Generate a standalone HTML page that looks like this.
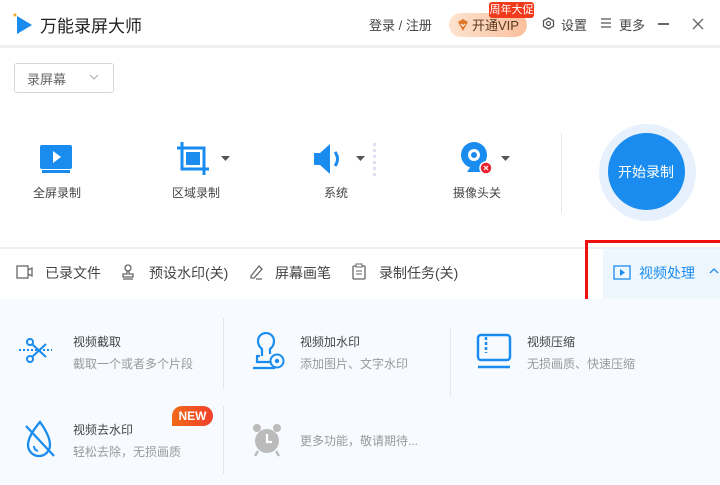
<!DOCTYPE html>
<html><head><meta charset="utf-8"><style>
*{margin:0;padding:0;box-sizing:border-box}
body{width:720px;height:485px;overflow:hidden;background:#fff;font-family:"Liberation Sans","Noto Sans CJK SC",sans-serif;color:#333;position:relative}
.a{position:absolute;white-space:nowrap}
.t{font-size:13px;color:#444}
.s{font-size:12px;color:#999}
.tb{font-size:14px;color:#444}
</style></head><body>
<!-- header -->
<svg class="a" style="left:12px;top:12px" width="22" height="24"><circle cx="3" cy="3" r="1.5" fill="#f5a623"/><path d="M5 4 L20 13 L5 22 Z" fill="#1a8cf0"/></svg>
<div class="a" style="left:40px;top:12px;font-size:17px;color:#222">万能录屏大师</div>
<div class="a t" style="left:369px;top:15px;color:#444">登录 / 注册</div>
<div class="a" style="left:449px;top:13px;width:78px;height:24px;border-radius:12px;background:linear-gradient(90deg,#fde3cf,#fbbf9c)"></div>
<svg class="a" style="left:456px;top:18px" width="14" height="14"><path d="M2 4 L7 1 L12 4 L7 13 Z" fill="#e0782a"/><path d="M5 6 L7 8 L9 6" stroke="#fff" fill="none" stroke-width="1.2"/></svg>
<div class="a t" style="left:472px;top:15px;color:#5a3a20">开通VIP</div>
<div class="a" style="left:489px;top:2px;width:45px;height:16px;background:#f23a1c;border-radius:3px;color:#fff;font-size:11px;line-height:16px;text-align:center">周年大促</div>
<svg class="a" style="left:542px;top:17px" width="13" height="13"><path d="M6.5 1 L11.5 3.8 L11.5 9.2 L6.5 12 L1.5 9.2 L1.5 3.8 Z" fill="none" stroke="#555" stroke-width="1.3"/><circle cx="6.5" cy="6.5" r="2" fill="none" stroke="#555" stroke-width="1.2"/></svg>
<div class="a t" style="left:561px;top:15px">设置</div>
<svg class="a" style="left:600px;top:17px" width="12" height="12"><path d="M1 2H11M1 6H11M1 10H11" stroke="#555" stroke-width="1.3"/></svg>
<div class="a t" style="left:619px;top:15px">更多</div>
<div class="a" style="left:658px;top:23px;width:11px;height:1.5px;background:#666"></div>
<svg class="a" style="left:692px;top:18px" width="12" height="12"><path d="M1 1L11 11M11 1L1 11" stroke="#666" stroke-width="1.3"/></svg>
<div class="a" style="left:0;top:45px;width:720px;height:3px;background:#f0f0f2"></div>
<!-- dropdown -->
<div class="a" style="left:14px;top:63px;width:100px;height:30px;border:1px solid #d6d6da;border-radius:3px"></div>
<div class="a t" style="left:27px;top:69px;color:#666">录屏幕</div>
<svg class="a" style="left:89px;top:74px" width="10" height="7"><path d="M1 1L5 5L9 1" stroke="#aaa" fill="none"/></svg>
<!-- icons row -->
<svg class="a" style="left:38px;top:144px" width="36" height="30"><rect x="2" y="1" width="32" height="24" rx="2" fill="#1a8cf0"/><rect x="4" y="26" width="28" height="3" fill="#1a8cf0"/><path d="M15 7L23 13L15 19Z" fill="#fff"/></svg>
<div class="a" style="left:33px;top:184px;font-size:12px;color:#444">全屏录制</div>
<svg class="a" style="left:176px;top:141px" width="36" height="36"><path d="M6 1V28H33M1 7H28V34" stroke="#1a8cf0" stroke-width="3" fill="none"/><rect x="10" y="11" width="14" height="13" fill="#1a8cf0"/></svg>
<svg class="a" style="left:221px;top:156px" width="9" height="6"><path d="M0 0H9L4.5 5Z" fill="#555"/></svg>
<div class="a" style="left:172px;top:184px;font-size:12px;color:#444">区域录制</div>
<svg class="a" style="left:312px;top:142px" width="40" height="34"><path d="M2 11H8L18 2V32L8 23H2Z" fill="#1a8cf0"/><path d="M23 10Q28 17 23 24" stroke="#1a8cf0" stroke-width="3" fill="none"/></svg>
<svg class="a" style="left:356px;top:156px" width="9" height="6"><path d="M0 0H9L4.5 5Z" fill="#555"/></svg>
<div class="a" style="left:373px;top:143px;width:3px;height:33px;border-left:3px dotted #dde0ee"></div>
<div class="a" style="left:324px;top:184px;font-size:12px;color:#444">系统</div>
<svg class="a" style="left:459px;top:141px" width="36" height="36"><circle cx="15" cy="14" r="13" fill="#1a8cf0"/><circle cx="15" cy="14" r="6" fill="#fff"/><circle cx="15" cy="14" r="3" fill="#1a8cf0"/><path d="M8 31H24L20 25H12Z" fill="#1a8cf0"/><circle cx="27" cy="27" r="6" fill="#e8252f" stroke="#fff" stroke-width="1.5"/><path d="M25 25L29 29M29 25L25 29" stroke="#fff" stroke-width="1.2"/></svg>
<svg class="a" style="left:501px;top:156px" width="9" height="6"><path d="M0 0H9L4.5 5Z" fill="#555"/></svg>
<div class="a" style="left:453px;top:184px;font-size:12px;color:#444">摄像头关</div>
<div class="a" style="left:561px;top:133px;width:1px;height:80px;background:#e6e6e6"></div>
<div class="a" style="left:599px;top:124px;width:97px;height:97px;border-radius:50%;background:#e6f1fd"></div>
<div class="a" style="left:608px;top:133px;width:77px;height:77px;border-radius:50%;background:#1a8cf0"></div>
<div class="a" style="left:618px;top:162px;font-size:14px;color:#fff">开始录制</div>
<!-- toolbar -->
<div class="a" style="left:0;top:247px;width:720px;height:2px;background:#f0f0f2"></div>
<svg class="a" style="left:16px;top:265px" width="18" height="14"><rect x="1" y="1" width="11" height="12" fill="none" stroke="#666" stroke-width="1.3"/><path d="M12 5L16 3V11L12 9" fill="none" stroke="#666" stroke-width="1.3"/></svg>
<div class="a tb" style="left:45px;top:263px">已录文件</div>
<svg class="a" style="left:121px;top:264px" width="14" height="16"><circle cx="7" cy="4" r="3" fill="none" stroke="#666" stroke-width="1.3"/><path d="M6 7V10H2V13H12V10H8V7M2 15H12" fill="none" stroke="#666" stroke-width="1.3"/></svg>
<div class="a tb" style="left:149px;top:263px">预设水印(关)</div>
<svg class="a" style="left:248px;top:264px" width="16" height="16"><path d="M3 12L11 2L14 5L6 14H3Z M8 15H14" fill="none" stroke="#666" stroke-width="1.3"/></svg>
<div class="a tb" style="left:275px;top:263px">屏幕画笔</div>
<svg class="a" style="left:352px;top:263px" width="14" height="17"><rect x="1" y="3" width="12" height="13" rx="1" fill="none" stroke="#666" stroke-width="1.3"/><rect x="4" y="1" width="6" height="3" fill="#fff" stroke="#666"/><path d="M4 8H10M4 11H10" stroke="#666"/></svg>
<div class="a tb" style="left:379px;top:263px">录制任务(关)</div>
<div class="a" style="left:603px;top:249px;width:117px;height:50px;background:#eef6fe"></div>
<svg class="a" style="left:613px;top:265px" width="18" height="15"><rect x="1" y="1" width="16" height="13" fill="none" stroke="#1a8cf0" stroke-width="1.3"/><path d="M7 4L12 7.5L7 11Z" fill="#1a8cf0"/></svg>
<div class="a tb" style="left:639px;top:263px;color:#1a8cf0">视频处理</div>
<svg class="a" style="left:708px;top:267px" width="12" height="8"><path d="M2 6L6 2L10 6" stroke="#1a8cf0" fill="none" stroke-width="1.3"/></svg>
<div class="a" style="left:585px;top:240px;width:140px;height:64px;border:3px solid #f01010"></div>
<!-- panel -->
<div class="a" style="left:0;top:299px;width:720px;height:186px;background:#f7fbff"></div>
<div class="a" style="left:223px;top:318px;width:1px;height:70px;background:#e4e6ea"></div>
<div class="a" style="left:450px;top:328px;width:1px;height:68px;background:#e4e6ea"></div>
<div class="a" style="left:223px;top:406px;width:1px;height:68px;background:#e4e6ea"></div>
<svg class="a" style="left:18px;top:338px" width="34" height="28"><path d="M1 12H34" stroke="#1a8cf0" stroke-width="2" stroke-dasharray="2 2"/><circle cx="12" cy="4" r="3" fill="none" stroke="#1a8cf0" stroke-width="2"/><circle cx="12" cy="21" r="3" fill="none" stroke="#1a8cf0" stroke-width="2"/><path d="M14 6L28 19M14 19L28 6" stroke="#1a8cf0" stroke-width="2"/></svg>
<div class="a t" style="left:73px;top:333px;font-size:12px">视频截取</div>
<div class="a s" style="left:73px;top:355px">截取一个或者多个片段</div>
<svg class="a" style="left:250px;top:332px" width="40" height="40"><path d="M10 24H7V30H28 M12 24V17Q8 14 8 9A8 8 0 0 1 24 9Q24 14 20 17V22" fill="none" stroke="#1a8cf0" stroke-width="2.2"/><path d="M3 36H25" stroke="#1a8cf0" stroke-width="2.2"/><circle cx="27" cy="29" r="6.5" fill="#f7fbff" stroke="#1a8cf0" stroke-width="2"/><circle cx="27" cy="29" r="2.2" fill="#1a8cf0"/></svg>
<div class="a t" style="left:300px;top:333px;font-size:12px">视频加水印</div>
<div class="a s" style="left:300px;top:355px">添加图片、文字水印</div>
<svg class="a" style="left:476px;top:333px" width="36" height="38"><rect x="2" y="2" width="32" height="25" rx="3" fill="none" stroke="#1a8cf0" stroke-width="2.5"/><path d="M10 4V20" stroke="#1a8cf0" stroke-width="2.5" stroke-dasharray="3 2"/><path d="M2 34H34" stroke="#1a8cf0" stroke-width="2.5"/></svg>
<div class="a t" style="left:527px;top:333px;font-size:12px">视频压缩</div>
<div class="a s" style="left:527px;top:355px">无损画质、快速压缩</div>
<div class="a" style="left:172px;top:406px;width:41px;height:20px;border-radius:10px 10px 10px 0;background:linear-gradient(90deg,#f06a1a,#f2402a);color:#fff;font-size:12px;font-weight:bold;line-height:20px;text-align:center">NEW</div>
<svg class="a" style="left:22px;top:420px" width="34" height="38"><path d="M18 2Q6 16 6 25A11 11 0 0 0 28 25Q28 16 18 2Z" fill="none" stroke="#1a8cf0" stroke-width="2.3"/><path d="M12 26Q12 30 16 31" stroke="#1a8cf0" stroke-width="2" fill="none"/><path d="M4 6L32 36" stroke="#1a8cf0" stroke-width="2.3"/></svg>
<div class="a t" style="left:73px;top:421px;font-size:12px">视频去水印</div>
<div class="a s" style="left:73px;top:443px">轻松去除，无损画质</div>
<svg class="a" style="left:252px;top:423px" width="30" height="34"><circle cx="5" cy="5" r="4" fill="#bbb"/><circle cx="25" cy="5" r="4" fill="#bbb"/><circle cx="15" cy="18" r="12" fill="#bbb"/><path d="M15 11V19H20" stroke="#fff" stroke-width="2.2" fill="none"/><path d="M6 28L3 33M24 28L27 33" stroke="#bbb" stroke-width="2.5"/></svg>
<div class="a s" style="left:300px;top:432px">更多功能，敬请期待...</div>
</body></html>
